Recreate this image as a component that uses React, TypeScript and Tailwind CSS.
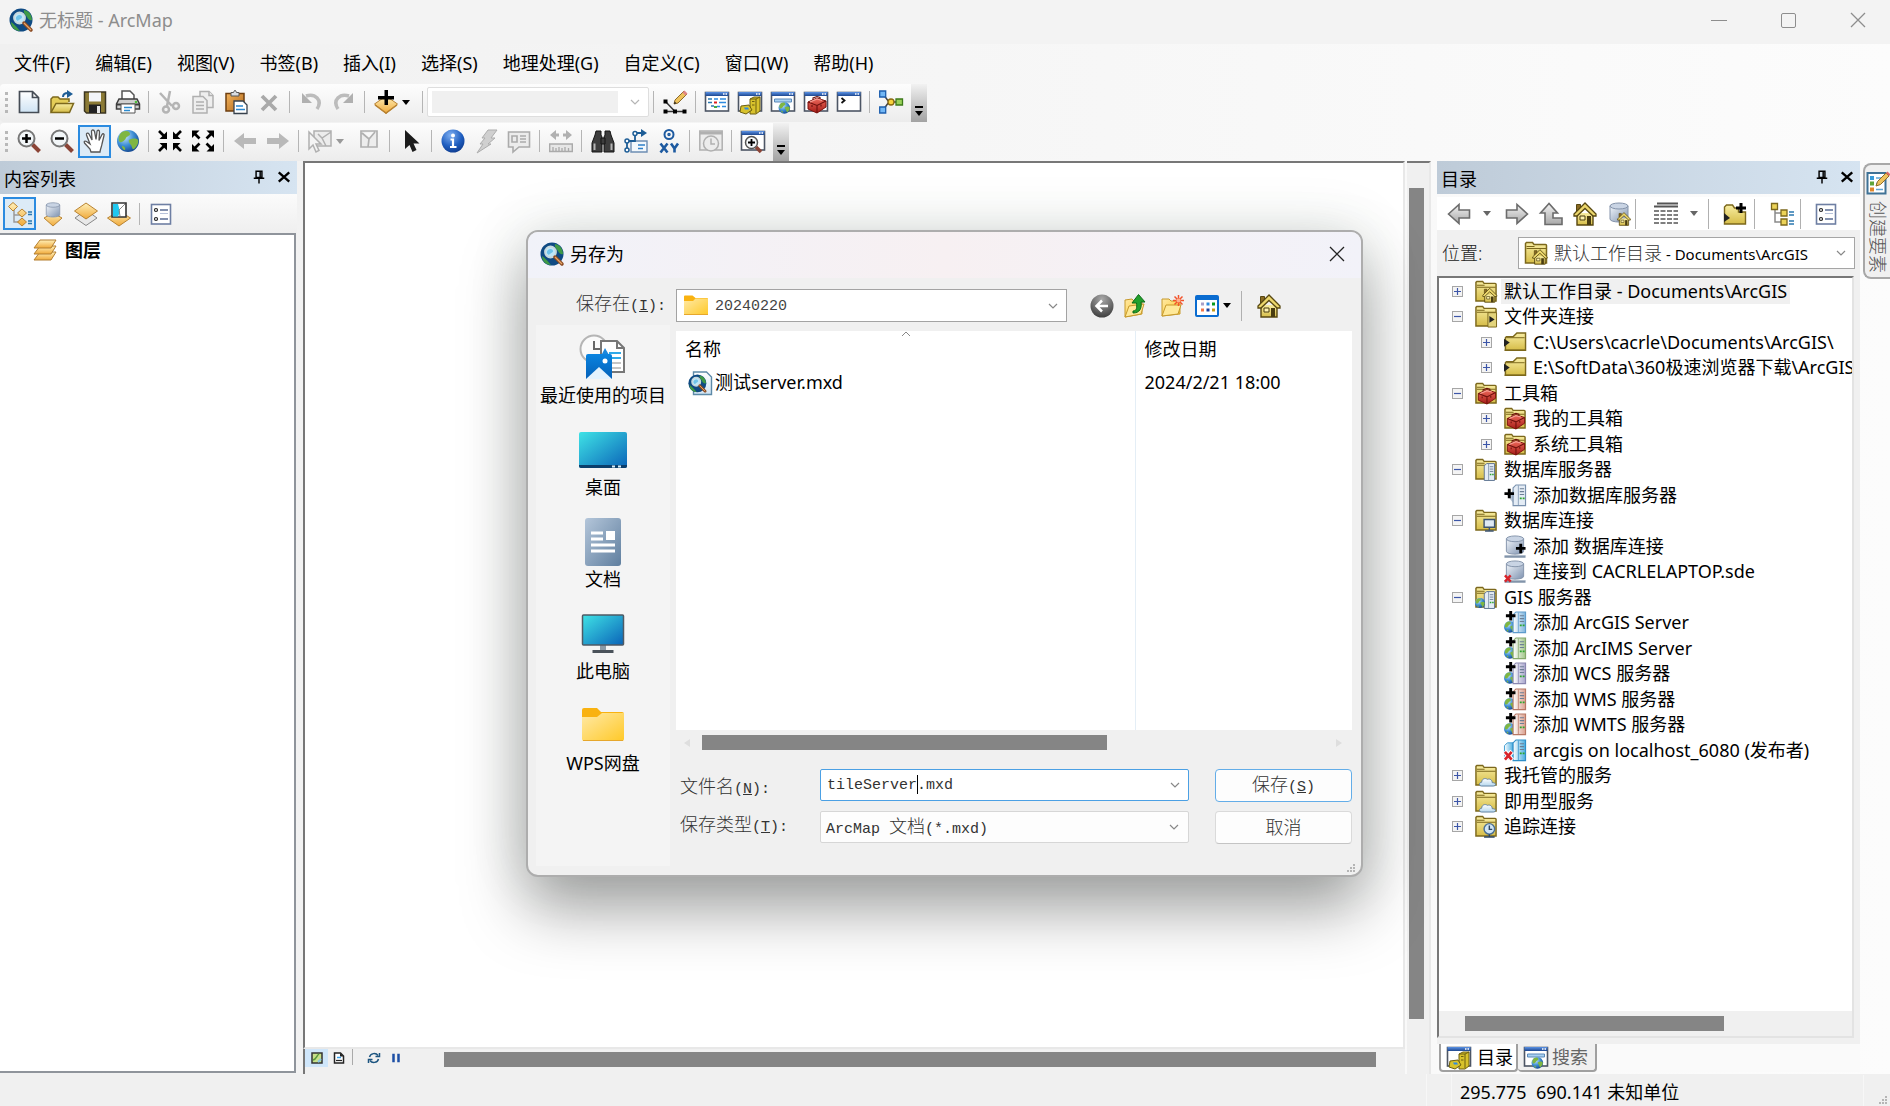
import React from "react";

const UI = "font-['Noto_Sans','Noto_Sans_CJK_SC',sans-serif]";
const MONO = "font-['Liberation_Mono',monospace] text-[15px]";

/* Latin runs of a Song-style label use a half-width monospace face. */
function Song({ text }: { text: string }) {
  const runs = text.match(/[\u3000-\u9fff]+|[^\u3000-\u9fff]+/g) ?? [];
  return (
    <>
      {runs.map((run, i) =>
        /[\u3000-\u9fff]/.test(run) ? (
          <span key={i}>{run}</span>
        ) : (
          <span key={i} className={MONO}>{run}</span>
        )
      )}
    </>
  );
}

function Defs() {
  const g = (id: string, a: string, b: string, x2 = "0", y2 = "1") => (
    <linearGradient id={id} x1="0" y1="0" x2={x2} y2={y2}>
      <stop offset="0" stopColor={a} />
      <stop offset="1" stopColor={b} />
    </linearGradient>
  );
  return (
    <svg className="absolute h-0 w-0" aria-hidden="true">
      <defs>
        {g("olive", "#f8eda2", "#d6bd48")}
        {g("paper", "#ffffff", "#cfe3f3")}
        {g("amber", "#fff0b8", "#f0a93a")}
        {g("steel", "#f2f6fb", "#7d91af", "1", "1")}
        {g("navy", "#5b93e6", "#1e478f")}
        {g("grayArrow", "#f2f2f2", "#a8a8a8")}
        {g("desk", "#3fe3e6", "#0a63b8", "1", "1")}
        {g("docs", "#b4c6da", "#607f9f", "1", "1")}
        {g("yellow", "#ffe9a6", "#ffc928", "1", "1")}
        {g("pic", "#0a84e0", "#0560b8")}
        {g("red", "#ef6a5c", "#a51c16")}
        {g("clip", "#f2b35c", "#b2681a", "1", "1")}
        {g("blueSrv", "#ffffff", "#7db4dd", "1", "0")}
        {g("greenSrv", "#ffffff", "#a2c689", "1", "0")}
        {g("purpleSrv", "#ffffff", "#a9a6cd", "1", "0")}
        {g("redSrv", "#ffffff", "#dba08e", "1", "0")}
        {g("cyanSrv", "#ffffff", "#49ade0", "1", "0")}
        {g("cloud", "#ffffff", "#b5d7ee")}
        <radialGradient id="ocean" cx="0.35" cy="0.3" r="0.8">
          <stop offset="0" stopColor="#c8e8fb" />
          <stop offset="0.5" stopColor="#3f8fd6" />
          <stop offset="1" stopColor="#0c3c85" />
        </radialGradient>
        <radialGradient id="infoBall" cx="0.4" cy="0.25" r="0.8">
          <stop offset="0" stopColor="#7fb0f2" />
          <stop offset="0.6" stopColor="#1f5ec0" />
          <stop offset="1" stopColor="#0e3a8c" />
        </radialGradient>
        <radialGradient id="backBall" cx="0.5" cy="0.2" r="0.9">
          <stop offset="0" stopColor="#a8a8a8" />
          <stop offset="1" stopColor="#333333" />
        </radialGradient>
      </defs>
    </svg>
  );
}

const Win = (
  <>
    <rect x="0.5" y="2.5" width="23" height="18.5" fill="#fff" stroke="#4d5665" strokeWidth="1.6" />
    <rect x="0.5" y="2" width="23" height="4" fill="url(#navy)" />
    <path d="M18 4h1.5M20.5 4H22" stroke="#fff" strokeWidth="1.4" />
  </>
);
const Folder = (
  <>
    <path d="M1.5 22V2.5l1-1h6l1.5 2h11.5a1 1 0 0 1 1 1V22z" fill="url(#olive)" stroke="#7c681c" strokeWidth="1.5" />
    <path d="M2.5 7.5h19.5M2.5 5.5h8" stroke="#7c681c" strokeWidth="1.1" />
  </>
);
const Toolbox = (
  <>
    <path d="M4 12l9-4 9 3v6l-9 6-9-4z" fill="url(#red)" stroke="#7d120e" />
    <path d="M4 12l9 3.5 9-4.5M13 15.5V23M9 10.5V8l4-1.5 3 1V10M8 15v2M17 14.5v2" fill="none" stroke="#6d100c" strokeWidth="1.1" />
    <path d="M6 12l7-3 5 1.500" fill="none" stroke="#f7a095" strokeWidth="1.2" />
  </>
);
const House = (
  <>
    <path d="M4 11v12h16V11" fill="url(#olive)" stroke="#574711" strokeWidth="1.4" />
    <path d="M3.500 2.500h4V9h-4z" fill="#8a6a22" stroke="#574711" />
    <path d="M12 1L1 12v2h3L12 6.500 20 14h3v-2z" fill="#ecd76c" stroke="#574711" strokeWidth="1.3" />
    <path d="M14 14h4v9h-4z" fill="#493c10" />
    <path d="M7 14h5v4H7z" fill="#fff3b0" stroke="#493c10" />
  </>
);
const Globe = (
  <>
    <circle cx="12" cy="12" r="11" fill="url(#ocean)" />
    <path d="M6 3c4-2 8-1 8 2 0 2-3 2-4 4s-4 5-6 4S2 6 6 3zM13 11c3-2 8-2 9 0s-1 7-4 9c-2 1-2-3-3-4s-3-4-2-5zM6 17c2 0 4 2 3 4-2 0-3-2-3-4z" fill="#7fb642" />
  </>
);
const Plus = <path d="M4.500 0h3v3.500H11v3H7.500V10h-3V6.500H1v-3h3.500z" fill="#000" />;
const Cloud = <path d="M7 22c-3 0-3-4 0-4 0-3 3-5 6-3 3-1 5 1 5 3.500 5 0 4 3.500 1 3.500z" transform="translate(0.500 1)" fill="url(#cloud)" stroke="#5f7f9f" />;
const server = (fill: string, edge: string) => (
  <>
    <path d="M10 4l3-3h10v21.500H10z" fill={fill} stroke={edge} strokeWidth="1.2" />
    <path d="M15.500 1.500V22" stroke={edge} strokeWidth="0.8" />
    <path d="M17 5h4.500M17 8h4.500M17 11h4.500" stroke="#6d7f95" strokeWidth="1.2" />
    <path d="M17 15h2M20 15h2" stroke="#2da52d" strokeWidth="2" />
  </>
);
const addServer = (fill: string, edge: string) => (
  <>
    <g transform="translate(0 10) scale(0.550)">{Globe}</g>
    {server(fill, edge)}
    <g transform="translate(1.500 0)">{Plus}</g>
  </>
);
const Cylinder = (
  <>
    <path d="M3 4v13c0 4 18 4 18 0V4z" fill="url(#steel)" stroke="#8493aa" />
    <ellipse cx="12" cy="4" rx="9" ry="3" fill="#c9d4e4" stroke="#8493aa" />
  </>
);
const Options = (
  <>
    <rect x="2.500" y="2.500" width="19" height="19.500" fill="#fff" stroke="#6e7fa3" strokeWidth="1.6" />
    <circle cx="7" cy="8" r="1.500" fill="none" stroke="#222" strokeWidth="1.2" />
    <circle cx="7" cy="17" r="1.500" fill="none" stroke="#222" strokeWidth="1.2" />
    <path d="M11 8h8M11 17h8" stroke="#5a6c94" strokeWidth="1.500" />
    <path d="M11 11.500h8" stroke="#b7c2da" />
  </>
);
const Logo = (
  <>
    <circle cx="12" cy="12" r="11.500" fill="#0f4a83" />
    <path d="M15 2c5 1 8 5 8 10-2 1-4-1-5-3s-4-4-3-7zM2 14c3 2 5 4 9 9-5 0-9-4-9-9z" fill="#3f9a45" />
    <circle cx="10.500" cy="10" r="5.500" fill="#bfe6f7" stroke="#c8d8dc" strokeWidth="1.800" />
    <path d="M8 8c2-2 5-1 5 1s-3 2-4 4c-2-1-3-3-1-5z" fill="#6fc3ea" />
    <path d="M15 15l7 7" stroke="#8a4a22" strokeWidth="3.500" strokeLinecap="round" />
    <path d="M15 15l7 7" stroke="#e6a56a" strokeWidth="1.200" />
  </>
);
const pointers = (kind: "in" | "out") => (
  <g fill="#000" stroke="#000">
    {["", "translate(24 0) scale(-1 1)", "translate(0 24) scale(1 -1)", "translate(24 24) scale(-1 -1)"].map((t) => (
      <g key={t} transform={t}>
        <path d={kind === "in" ? "M1 2l5 5" : "M8.500 9.500L4 5"} strokeWidth="2.600" />
        <path d={kind === "in" ? "M9 2.500V10H1.500z" : "M1 1.500h7.500L1 9z"} stroke="none" />
      </g>
    ))}
  </g>
);
const magnifier = (sign: React.ReactNode) => (
  <>
    <path d="M15.500 15.500l7 7" stroke="#8b4436" strokeWidth="4" />
    <circle cx="9.500" cy="9.500" r="8" fill="#f2f6f8" stroke="#777" strokeWidth="2" />
    {sign}
  </>
);
const treeDots = (c: string) => (
  <>
    <path d="M5 6v14h7M5 11h7" fill="none" stroke="#8a8a8a" strokeWidth="1.500" />
    <g fill={c} stroke="#7c681c" strokeWidth="1.300">
      <path d="M1.500 1.500h6v6h-6zM11 8h6v6h-6zM11 17h6v6h-6z" />
    </g>
    <path d="M19 10h5M19 13h5M19 19h5M19 22h5" stroke="#2b78b0" strokeWidth="1.500" />
  </>
);

const ICONS: Record<string, React.ReactNode> = {
  logo: Logo,
  new: <path d="M2.500 1.500h13l6 6v15h-19zM15.500 1.500v6h6" fill="url(#paper)" stroke="#454c55" strokeWidth="1.700" />,
  open: (
    <>
      <path d="M1 22V9l2-2h5l2 2h9v3" fill="#e4cd58" stroke="#7c681c" strokeWidth="1.500" />
      <path d="M1 22.500l5-9h17.500l-4 9z" fill="url(#olive)" stroke="#7c681c" strokeWidth="1.500" />
      <path d="M13 7c0-3 2-4 5-4" fill="none" stroke="#1d5d96" strokeWidth="2" />
      <path d="M17 0l6 4-6 4z" fill="#1d5d96" />
    </>
  ),
  save: (
    <>
      <path d="M1.500 2h21v21H3.500l-2-2z" fill="#8b7a35" stroke="#3b3520" strokeWidth="1.500" />
      <path d="M6 2.500h12v9H6z" fill="#f3f5f8" />
      <path d="M6 14.500h12V23H6z" fill="#222" />
      <path d="M14 16h3v7h-3z" fill="#e8e8e8" />
    </>
  ),
  print: (
    <>
      <path d="M6 9V1h8l4 4v4" fill="#fff" stroke="#555" strokeWidth="1.500" />
      <path d="M3 9h18l2.500 5v5H.5v-5z" fill="#cfcfcf" stroke="#3e3e3e" strokeWidth="1.500" />
      <path d="M1 14.500h22" stroke="#3e3e3e" strokeWidth="2" />
      <path d="M5 14h14v9H5z" fill="#fff" stroke="#555" />
      <path d="M8 17.500h8M8 20.500h6" stroke="#2b8bd0" strokeWidth="1.500" />
      <circle cx="20" cy="12" r="1.300" fill="#4fc03a" />
    </>
  ),
  cut: (
    <g fill="none" stroke="#b4b4b4" strokeWidth="2.500">
      <path d="M2 3l12 13M12 1l-3 15" />
      <circle cx="8" cy="19.500" r="3" />
      <circle cx="18" cy="16" r="3" />
    </g>
  ),
  copy: (
    <g fill="#eee" stroke="#b0b0b0" strokeWidth="1.500">
      <path d="M9 1.500h9l4 4v12H9z" />
      <path d="M2 6.500h10l4 4V23H2z" />
      <path d="M5 12h8M5 15.500h8M5 19h8M18 1.500v4h4" />
    </g>
  ),
  paste: (
    <>
      <path d="M2 3.500h18V21H2z" fill="url(#clip)" stroke="#6e3f10" strokeWidth="1.500" />
      <path d="M7 6V2.500h2.500l1-2h1l1 2H15V6z" fill="#d9dde2" stroke="#555" />
      <path d="M10 11h9l4 4v8.500H10z" fill="#fff" stroke="#36414d" strokeWidth="1.300" />
      <path d="M12 16h7M12 19.500h9" stroke="#2a86cf" strokeWidth="1.500" />
    </>
  ),
  del: <path d="M5 6l14 14M19 6L5 20" stroke="#a9a9a9" strokeWidth="3.800" />,
  undo: (
    <g>
      <path d="M7 6c9-3 17 4 11 13" fill="none" stroke="#bcbcbc" strokeWidth="3.500" />
      <path d="M3 3v10h10z" fill="#b0b0b0" />
    </g>
  ),
  redo: (
    <g transform="translate(24 0) scale(-1 1)">
      <path d="M7 6c9-3 17 4 11 13" fill="none" stroke="#bcbcbc" strokeWidth="3.500" />
      <path d="M3 3v10h10z" fill="#b0b0b0" />
    </g>
  ),
  add: (
    <>
      <path d="M12 6l11.500 8L12 23.500.5 14z" fill="url(#amber)" stroke="#b98332" />
      <path d="M1 15l11 8 11-8" fill="none" stroke="#b98332" strokeWidth="1.500" />
      <path d="M10.500 0h3.500v6h6v3.500h-6V15h-3.500V9.500H4V6h6.500z" fill="#000" />
    </>
  ),
  editor: (
    <>
      <path d="M2.500 11.500L12 21.500M2.500 21.500H22" stroke="#333" strokeWidth="1.500" fill="none" />
      <path d="M.5 9.500h4v4h-4zM.5 19.500h4v4h-4zM10 19.500h4v4h-4zM19.500 19.500h4v4h-4z" fill="#000" />
      <path d="M11 14l1-4L21 1l3 3-9 9z" fill="#eec25c" stroke="#8c6a2a" />
      <path d="M19.500 2.500L21.500.5l3 3-2 2z" fill="#e08585" />
      <path d="M11 14l.700-2.500 1.800 1.800z" fill="#222" />
    </>
  ),
  toc: (
    <>
      {Win}
      <path d="M3 9h4M3 12.500h4M6 16h3" stroke="#2b78b0" strokeWidth="1.500" />
      <path d="M9 9h4M15 9h6M14 12.500h7M12 16.500h3M17 16.500h4" stroke="#2f8be0" strokeWidth="1.700" />
      <path d="M9 12.500h3" stroke="#d22" strokeWidth="2" />
      <path d="M9 17h3" stroke="#4a4" strokeWidth="2" />
    </>
  ),
  catalog: (
    <>
      {Win}
      <path d="M12 9l4-2h6v14l-4 3h-6z" fill="#d8c22c" stroke="#6d5f10" />
      <path d="M18 9v14M12 9h6l4-2M14 11.500h2.500M14 15h2.500" fill="none" stroke="#6d5f10" />
      <path d="M3 16l8-1 3 5-6 4-6-2z" fill="#d8c22c" stroke="#6d5f10" />
      <path d="M6 17.500h4l1 2H7z" fill="#2f8be0" />
    </>
  ),
  search: (
    <>
      {Win}
      <path d="M3.500 9h17v3h-17z" fill="#a9d1f2" stroke="#5a88b8" />
      <g transform="translate(7 11.500) scale(0.530)">{Globe}</g>
    </>
  ),
  toolbox: (
    <>
      {Win}
      {Toolbox}
    </>
  ),
  python: (
    <>
      {Win}
      <path d="M4.500 8l3 2.500-3 2.500" fill="none" stroke="#111" strokeWidth="1.800" />
    </>
  ),
  model: (
    <>
      <path d="M4 4l6 8-6 8M12 12h10" fill="none" stroke="#444" strokeWidth="1.500" />
      <path d="M.7 1h6v6h-6zM.7 17h6v6h-6z" fill="#72b7f5" stroke="#1e5fae" strokeWidth="1.300" />
      <circle cx="12" cy="12" r="3" fill="#f8d23c" stroke="#8c6a10" strokeWidth="1.300" />
      <path d="M17 9h6.500v6H17z" fill="#9ad25a" stroke="#3d7a1a" strokeWidth="1.300" />
    </>
  ),
  zoomin: magnifier(<path d="M9.500 5v9M5 9.500h9" stroke="#000" strokeWidth="2.500" />),
  zoomout: magnifier(<path d="M5 9.500h9" stroke="#000" strokeWidth="2.500" />),
  pan: (
    <path
      d="M8 23l-1-3-5.500-6c-1-1.500.5-2.500 2-1.500L7 15 3.500 6c-.5-2 1.500-2.500 2.500-1l3 6L8.500 2.500c0-2 2.500-2 3 0l1.500 8 1-8c.3-2 2.500-1.500 2.500.5l-.5 8.500 3-6c1-1.500 2.500-.5 2 1L19 15c-.5 3-1.500 4-2 8z"
      fill="#fff"
      stroke="#555"
      strokeWidth="1.300"
    />
  ),
  globe: Globe,
  fixin: pointers("in"),
  fixout: pointers("out"),
  back: <path d="M1 12l10-8v5h12v6H11v5z" fill="#b9b9b9" />,
  fwd: <path d="M23 12L13 4v5H1v6h12v5z" fill="#b9b9b9" />,
  selfeat: (
    <g stroke="#b0b0b0" strokeWidth="1.500" fill="#ececec">
      <path d="M6 2h17v15H6zM23 3L14 9l-4-4M14 9l4 8" />
      <path d="M1 3v17l4-4 3 7 3-1.500-3-6.500h5z" fill="#f4f4f4" />
    </g>
  ),
  clearsel: <path d="M4 2h16v16H4zM5 4l7 6 6-7M12 10l-1 8" stroke="#b0b0b0" strokeWidth="1.700" fill="#ededed" />,
  pointer: <path d="M6 1v19l4.500-4 3 7 4-2-3-6.500h6z" fill="#1c1c1c" />,
  info: (
    <>
      <circle cx="12" cy="12" r="11.500" fill="url(#infoBall)" />
      <circle cx="12" cy="6.500" r="2" fill="#fff" />
      <path d="M9.500 10.500H12V18M9 18h6.500" fill="none" stroke="#fff" strokeWidth="2.200" />
    </>
  ),
  bolt: <path d="M14 1h9l-6 8h4l-7 6h3L3 24l6-9H6l5-6H8z" fill="#d0d0d0" stroke="#adadad" />,
  html: (
    <g stroke="#ababab" strokeWidth="1.600" fill="#ececec">
      <path d="M1.500 3h21v15H12l-6 5v-5H1.500z" />
      <path d="M5 7h5v6H5zM13 7h6M13 10h6M13 13h6" />
    </g>
  ),
  measure: (
    <g fill="#b0b0b0">
      <path d="M1 6l6-5v3.500h3v3H7V11zM23 6l-6-5v3.500h-3v3h3V11z" />
      <path d="M.7 15h22.600v7.500H.7z" fill="#e6e6e6" stroke="#aaa" strokeWidth="1.400" />
      <path d="M4 18v4M7 19v3M10 18v4M13 19v3M16 18v4M19.500 19v3" stroke="#aaa" strokeWidth="1.300" />
    </g>
  ),
  binoc: (
    <g fill="#3d3d3d" stroke="#151515">
      <path d="M5 2h5v4l1 2v15H1v-9L4 6zM19 2h-5v4l-1 2v15h10v-9l-3-8z" />
      <path d="M10 9h4v6h-4z" />
      <path d="M3.500 14.500V21M20.500 14.500V21" stroke="#b5b5b5" strokeWidth="2" />
    </g>
  ),
  route: (
    <>
      <path d="M7 12h16v11H7z" fill="#f3f8fc" stroke="#6d8db3" strokeWidth="1.400" />
      <path d="M14 16h7M14 19.500h5" stroke="#2f7fc8" strokeWidth="1.600" />
      <path d="M3 21V12h8V4h8" fill="none" stroke="#1d5d96" strokeWidth="1.800" />
      <path d="M17 0l6 4-6 4z" fill="#1d5d96" />
      <g fill="#fff" stroke="#1d5d96" strokeWidth="1.500">
        <circle cx="3" cy="21" r="2" />
        <circle cx="3" cy="12" r="2" />
        <circle cx="11" cy="4.500" r="2" />
      </g>
    </>
  ),
  xy: (
    <g fill="none" stroke="#1d5aa0">
      <circle cx="12" cy="5.500" r="4.500" strokeWidth="2" />
      <circle cx="12" cy="5.500" r="1" strokeWidth="1.500" />
      <path d="M3.500 14.500l7 9M10.500 14.500l-7 9M14 14.500l3.500 5 3.500-5M17.500 19.500v4" strokeWidth="2.600" />
    </g>
  ),
  time: (
    <g stroke="#b0b0b0" strokeWidth="1.500" fill="#ececec">
      <path d="M.8 2h22.400v19H.8z" />
      <path d="M1 4h22" strokeWidth="3" />
      <circle cx="12" cy="14.500" r="7.500" />
      <path d="M12 9.500v5.500h4" fill="none" />
    </g>
  ),
  viewer: (
    <>
      {Win}
      <path d="M15 18l5 5" stroke="#8b4436" strokeWidth="3.500" />
      <circle cx="10.500" cy="13.500" r="6" fill="#f6f9fb" stroke="#555" strokeWidth="1.500" />
      <path d="M10.500 10v7M7 13.500h7" stroke="#000" strokeWidth="1.800" />
    </>
  ),
  listorder: (
    <>
      <path d="M6 8v12h7M6 13h7" fill="none" stroke="#9a9a9a" strokeWidth="1.500" />
      <g fill="url(#amber)" stroke="#b98332">
        <path d="M5 .5l4.500 4L5 9 .5 4.500zM14 7l4.500 4-4.500 4-4.500-4zM14 16l4.500 4-4.500 4-4.500-4z" />
      </g>
      <path d="M20 10h4M20 12.500h4M20 19h4M20 21.500h4" stroke="#2b78b0" strokeWidth="1.600" />
    </>
  ),
  listsource: (
    <>
      <path d="M12 11l9 5-9 8-9-8z" fill="url(#amber)" stroke="#b98332" />
      <g transform="translate(3 0) scale(0.750)">{Cylinder}</g>
    </>
  ),
  listvis: (
    <>
      <path d="M12 8l11 8-11 7.500L1 16z" fill="#e8e8e8" stroke="#888" />
      <path d="M12 1l11.500 8L12 17 .5 9z" fill="url(#amber)" stroke="#b98332" />
    </>
  ),
  listsel: (
    <>
      <path d="M12 9l11.500 7L12 24 .5 16z" fill="url(#amber)" stroke="#b98332" />
      <path d="M5 1h14v14H5z" fill="#fff" stroke="#333" strokeWidth="1.600" />
      <path d="M6 2h5l2 8-2 4.500H6z" fill="#20c8f0" />
      <path d="M18 2l-6 6 1 6" fill="none" stroke="#888" />
    </>
  ),
  options: Options,
  layers: (
    <g fill="url(#amber)" stroke="#b37f30">
      <path d="M7 14h16l-5 8H1z" />
      <path d="M7 8h16l-5 8H1z" />
      <path d="M7 2h16l-5 8H1z" />
    </g>
  ),
  arrowl: <path d="M1.500 12L12 2.500V8h10.500v8H12v5.500z" fill="url(#grayArrow)" stroke="#6b6b6b" strokeWidth="1.600" />,
  arrowr: <path d="M22.500 12L12 2.500V8H1.500v8H12v5.500z" fill="url(#grayArrow)" stroke="#6b6b6b" strokeWidth="1.600" />,
  arrowup: <path d="M10 1.500L1.500 11H6v11.500h17V16H14v-5h4.500z" fill="url(#grayArrow)" stroke="#6b6b6b" strokeWidth="1.600" />,
  home: House,
  dbhome: (
    <>
      {Cylinder}
      <g transform="translate(10 10) scale(0.580)">{House}</g>
    </>
  ),
  grid: (
    <g stroke="#555" fill="none">
      <path d="M3 1.500h21M0 4.500h24" strokeWidth="2" />
      <path d="M0 9h24M0 13h24M0 17h24M0 21h24" strokeWidth="1.600" strokeDasharray="5 1.500" />
    </g>
  ),
  addfolder: (
    <>
      <path d="M1.500 22V5l2-2h6l2 3h4v4h7v12z" fill="url(#olive)" stroke="#7c681c" strokeWidth="1.400" />
      <path d="M1 11l6 5-6 4z" fill="#222" />
      <g transform="translate(12 1)">{Plus}</g>
    </>
  ),
  tree: treeDots("#ecd358"),
  folderhome: (
    <>
      {Folder}
      <g transform="translate(8 8) scale(0.660)">{House}</g>
    </>
  ),
  folderlink: (
    <>
      {Folder}
      <path d="M14 8h9v15h-9z" fill="#e3d47c" stroke="#7c681c" />
      <path d="M15.500 11.500l5.500 3.500-5.500 3.500z" fill="#222" />
    </>
  ),
  folderconn: (
    <>
      <path d="M2 20V7l1-1h7l4-4h9v18z" fill="url(#olive)" stroke="#7c681c" strokeWidth="1.500" />
      <path d="M3 7h19M1 20h22" stroke="#7c681c" />
      <path d="M.5 8l6 4-6 4.500z" fill="#222" />
    </>
  ),
  foldertool: (
    <>
      {Folder}
      {Toolbox}
    </>
  ),
  folderserver: (
    <>
      {Folder}
      <g transform="translate(2 5) scale(0.820)">{server("#e4ecf5", "#5d7390")}</g>
    </>
  ),
  foldergis: (
    <>
      {Folder}
      <g transform="translate(2 5) scale(0.820)">{server("#e4ecf5", "#5d7390")}</g>
      <g transform="translate(0 12) scale(0.480)">{Globe}</g>
    </>
  ),
  folderdb: (
    <>
      {Folder}
      <path d="M10 11h11v8H10zM15.500 19v4M11 23h9" fill="#dfe9f4" stroke="#3d5470" strokeWidth="1.500" />
    </>
  ),
  foldercloud: (
    <>
      {Folder}
      {Cloud}
    </>
  ),
  folderclock: (
    <>
      {Folder}
      <circle cx="15.500" cy="14.500" r="5.500" fill="#cfe5f7" stroke="#4a6f94" strokeWidth="1.500" />
      <path d="M15.500 11v4h3M15.500 20v3M10 23h11" fill="none" stroke="#2c4560" strokeWidth="1.500" />
    </>
  ),
  adddbserver: (
    <>
      <path d="M4 12l7-6v15z" fill="#b7c4d4" />
      {server("#e4ecf5", "#7890ad")}
      <g transform="translate(0 5)">{Plus}</g>
    </>
  ),
  adddb: (
    <>
      <path d="M1 22.500h22" stroke="#8294aa" strokeWidth="2.500" />
      {Cylinder}
      <g transform="translate(12 9)">{Plus}</g>
    </>
  ),
  sde: (
    <>
      <path d="M1 22.500h22" stroke="#8294aa" strokeWidth="2.500" />
      {Cylinder}
      <path d="M1.500 16l6 6.500M7.500 16l-6 6.500" stroke="#d8232a" strokeWidth="2.500" />
    </>
  ),
  sblue: addServer("url(#blueSrv)", "#5f9ccc"),
  sgreen: addServer("url(#greenSrv)", "#86a86c"),
  spurple: addServer("url(#purpleSrv)", "#8a87b0"),
  sred: addServer("url(#redSrv)", "#b87865"),
  scyan: (
    <>
      <path d="M1 21V7l3-3h6v17z" fill="url(#cyanSrv)" stroke="#3d9bd0" />
      {server("url(#cyanSrv)", "#2f8fc8")}
      <path d="M1 13l8 9M9 13l-8 9" stroke="#fff" strokeWidth="5" />
      <path d="M1.500 13.500l7 8M8.500 13.500l-7 8" stroke="#d8232a" strokeWidth="2.800" />
    </>
  ),
  create: (
    <>
      <path d="M1.500 2h18v20.500h-18z" fill="#fff" stroke="#3f7296" strokeWidth="2" />
      <path d="M4 5h4v4H4z" fill="#3a9bd8" />
      <path d="M4 10.500h4v4H4z" fill="#5fa53a" />
      <path d="M4 16.500h4v4H4z" fill="#e0862a" />
      <path d="M10 7h7M10 12.500h4M10 18.500h7" stroke="#5fa5d5" strokeWidth="1.500" />
      <path d="M10 15l1.500-4.500L20 2l3 3-8.500 8.500z" fill="#eec25c" stroke="#8c6a2a" />
      <path d="M20 2l1.500-1.500 3 3L23 5z" fill="#d66" />
    </>
  ),
  backball: (
    <>
      <circle cx="12" cy="12" r="11.500" fill="url(#backBall)" />
      <path d="M18 12H7M12 6.500L6.500 12l5.500 5.500" fill="none" stroke="#fff" strokeWidth="2.500" />
    </>
  ),
  upfolder: (
    <>
      <path d="M2 23V6l7-1 2 2 8-1v14z" fill="url(#yellow)" stroke="#c79a2c" />
      <path d="M2 23l4-11 15-2-3 10z" fill="#ffe999" stroke="#c79a2c" />
      <path d="M10 17c4 0 4-4 3.500-8H9l6.500-8.500L22 8h-4c1 6-1 11-8 11z" fill="#22a02c" stroke="#0e6b18" />
    </>
  ),
  newfolder: (
    <>
      <path d="M2 22V5h7l2 2h9v13z" fill="url(#yellow)" stroke="#c79a2c" />
      <path d="M2 22l4-11h15l-3 9z" fill="#ffe999" stroke="#c79a2c" />
      <path d="M18.500 1v11M13 6.500h11M14.500 2.500l8 8M22.500 2.500l-8 8" stroke="#f2532c" strokeWidth="1.500" />
      <circle cx="18.500" cy="6.500" r="2" fill="#ffb08c" />
    </>
  ),
  views: (
    <>
      <rect x="1" y="2" width="22" height="20" rx="1" fill="#fff" stroke="#0a6cd0" strokeWidth="2" />
      <path d="M1 2h22v4H1z" fill="#0a6cd0" />
      <path d="M6 10h3" stroke="#a9a0c8" strokeWidth="3" />
      <path d="M11.500 10h3" stroke="#2d8be0" strokeWidth="3" />
      <path d="M17 10h3" stroke="#0a9a1c" strokeWidth="3" />
      <path d="M6 16h3" stroke="#f3774a" strokeWidth="3" />
      <path d="M11.500 16h3" stroke="#1b3f9c" strokeWidth="3" />
      <path d="M17 16h3" stroke="#c59a1a" strokeWidth="3" />
    </>
  ),
  folder: (
    <>
      <path d="M0 3.500a1 1 0 0 1 1-1h7.500l3 2.500H23a1 1 0 0 1 1 1v4H0z" fill="#f9b210" />
      <path d="M0 8h9l2.500-2.500H24V21a1 1 0 0 1-1 1H1a1 1 0 0 1-1-1z" fill="url(#yellow)" />
      <path d="M0 21.500h24" stroke="#e6a72c" />
    </>
  ),
  mxd: (
    <>
      <path d="M5.500 1h13l5 5v17.500h-18z" fill="url(#paper)" stroke="#5d8aa8" strokeWidth="1.400" />
      <g transform="translate(0 3) scale(0.780)">{Logo}</g>
    </>
  ),
  pin: <path d="M7 2h10v11H7zM14 2v11M3 14h18M12 14v9" fill="none" stroke="#000" strokeWidth="2.500" />,
  close: <path d="M3 4l18 16M21 4L3 20" stroke="#000" strokeWidth="4" />,
  mapview: (
    <>
      <rect x="2" y="2" width="20" height="20" fill="#c8e08a" stroke="#333" strokeWidth="3" />
      <path d="M4 16c8-2 6-8 12-12" fill="none" stroke="#5a9a3a" strokeWidth="3" />
      <path d="M14 20l6-6" stroke="#8ac8e8" strokeWidth="4" />
    </>
  ),
  pageview: (
    <>
      <path d="M3 2h12l6 6v14H3z" fill="#fff" stroke="#222" strokeWidth="3" />
      <path d="M14 2v7h7" fill="#222" />
      <path d="M8 11h8" stroke="#3aa0e8" strokeWidth="3" />
      <path d="M6 17h12" stroke="#222" strokeWidth="2.500" />
    </>
  ),
  refresh: (
    <g fill="none" stroke="#1d5580" strokeWidth="3">
      <path d="M3 10c2-8 13-9 17-3M21 14c-2 8-13 9-17 3" />
      <path d="M15 9h8V2M9 15H1v7" />
    </g>
  ),
  pause: <path d="M6 2v20M18 2v20" stroke="#1d4fa5" strokeWidth="6" />,
};

function Icon({ name, className = "h-6 w-6" }: { name: string; className?: string }) {
  return (
    <svg viewBox="0 0 24 24" className={`${className} shrink-0 overflow-visible`} aria-hidden="true">
      {ICONS[name]}
    </svg>
  );
}

function Tool({ name, active = false }: { name: string; active?: boolean }) {
  return (
    <button
      type="button"
      aria-label={name}
      className={`flex h-[33px] w-[33px] shrink-0 items-center justify-center ${active ? "border-2 border-[#2b8be0] bg-[#dcebf7]" : ""}`}
    >
      <Icon name={name} />
    </button>
  );
}
const Sep = () => <span className="mx-1 h-[22px] w-px shrink-0 bg-[#b5b5b5]" />;
const Caret = ({ className = "text-black" }: { className?: string }) => (
  <svg viewBox="0 0 8 5" className={`h-[5px] w-2 ${className}`} aria-hidden="true">
    <path d="M0 0h8L4 5z" fill="currentColor" />
  </svg>
);
const CaretTool = ({ className, width = "w-4" }: { className?: string; width?: string }) => (
  <button type="button" aria-label="more" className={`flex h-8 shrink-0 items-center ${width}`}>
    <Caret className={className} />
  </button>
);
const Chevron = ({ className = "text-[#888]" }: { className?: string }) => (
  <svg viewBox="0 0 10 6" className={`pointer-events-none h-[6px] w-[10px] shrink-0 ${className}`} aria-hidden="true">
    <path d="M1 1l4 4 4-4" fill="none" stroke="currentColor" strokeWidth="1.200" />
  </svg>
);
const FieldChevron = () => (
  <span className="pointer-events-none absolute inset-y-0 right-[9px] flex items-center">
    <Chevron />
  </span>
);
const Grip = () => (
  <span className="flex w-3 shrink-0 flex-col items-center justify-center gap-[3px]">
    {[0, 1, 2, 3].map((i) => (
      <span key={i} className="h-[3px] w-[3px] bg-[#b8b8b8]" />
    ))}
  </span>
);
const Overflow = () => (
  <button type="button" aria-label="toolbar options" className="flex w-4 shrink-0 flex-col items-center justify-end gap-[3px] self-stretch bg-linear-to-b from-[#f2f2f2] to-[#a3a3a3] pb-[6px]">
    <span className="h-[2px] w-2 bg-black" />
    <Caret />
  </button>
);

function Toolbar({ items }: { items: (string | React.ReactElement)[] }) {
  return (
    <div className="flex h-[38px] items-stretch">
      <div className="flex items-center rounded-l bg-linear-to-b from-[#fdfdfd] to-[#ececec] pb-[2px] pr-1">
        <Grip />
        {items.map((it, i) =>
          typeof it !== "string" ? (
            <React.Fragment key={i}>{it}</React.Fragment>
          ) : it === "|" ? (
            <Sep key={i} />
          ) : (
            <Tool key={i} name={it} active={it === "pan"} />
          )
        )}
      </div>
      <Overflow />
    </div>
  );
}

const MENUS = ["文件(F)", "编辑(E)", "视图(V)", "书签(B)", "插入(I)", "选择(S)", "地理处理(G)", "自定义(C)", "窗口(W)", "帮助(H)"];

function PanelTitle({ text }: { text: string }) {
  return (
    <header className="flex h-[33px] shrink-0 items-center justify-between bg-linear-to-r from-[#becbd8] to-[#d6e4f1] pl-1 pr-[6px] text-[18px]">
      <h2 className="pt-[3px]">{text}</h2>
      <div className="flex items-center gap-[11px] pb-[2px]">
        <button type="button" aria-label="pin"><Icon name="pin" className="h-4 w-[14px]" /></button>
        <button type="button" aria-label="close panel"><Icon name="close" className="h-[14px] w-[14px]" /></button>
      </div>
    </header>
  );
}

type Node = { level: 0 | 1; toggle?: "+" | "-"; icon: string; text: string; selected?: boolean };
const NODES: Node[] = [
  { level: 0, toggle: "+", icon: "folderhome", text: "默认工作目录 - Documents\\ArcGIS", selected: true },
  { level: 0, toggle: "-", icon: "folderlink", text: "文件夹连接" },
  { level: 1, toggle: "+", icon: "folderconn", text: "C:\\Users\\cacrle\\Documents\\ArcGIS\\" },
  { level: 1, toggle: "+", icon: "folderconn", text: "E:\\SoftData\\360极速浏览器下载\\ArcGIS" },
  { level: 0, toggle: "-", icon: "foldertool", text: "工具箱" },
  { level: 1, toggle: "+", icon: "foldertool", text: "我的工具箱" },
  { level: 1, toggle: "+", icon: "foldertool", text: "系统工具箱" },
  { level: 0, toggle: "-", icon: "folderserver", text: "数据库服务器" },
  { level: 1, icon: "adddbserver", text: "添加数据库服务器" },
  { level: 0, toggle: "-", icon: "folderdb", text: "数据库连接" },
  { level: 1, icon: "adddb", text: "添加 数据库连接" },
  { level: 1, icon: "sde", text: "连接到 CACRLELAPTOP.sde" },
  { level: 0, toggle: "-", icon: "foldergis", text: "GIS 服务器" },
  { level: 1, icon: "sblue", text: "添加 ArcGIS Server" },
  { level: 1, icon: "sgreen", text: "添加 ArcIMS Server" },
  { level: 1, icon: "spurple", text: "添加 WCS 服务器" },
  { level: 1, icon: "sred", text: "添加 WMS 服务器" },
  { level: 1, icon: "sred", text: "添加 WMTS 服务器" },
  { level: 1, icon: "scyan", text: "arcgis on localhost_6080 (发布者)" },
  { level: 0, toggle: "+", icon: "foldercloud", text: "我托管的服务" },
  { level: 0, toggle: "+", icon: "foldercloud", text: "即用型服务" },
  { level: 0, toggle: "+", icon: "folderclock", text: "追踪连接" },
];

function Toggle({ sign }: { sign?: "+" | "-" }) {
  if (!sign) return <span className="w-[11px] shrink-0" />;
  return (
    <button type="button" aria-label={sign === "+" ? "expand" : "collapse"} className="h-[11px] w-[11px] shrink-0">
      <svg viewBox="0 0 11 11" className="h-full w-full">
        <rect x="0.5" y="0.5" width="10" height="10" fill="#f4f4f4" stroke="#a6a6a6" />
        <path d={sign === "+" ? "M2 5.500h7M5.500 2v7" : "M2 5.500h7"} stroke="#3c56a8" strokeWidth="1.200" />
      </svg>
    </button>
  );
}

function Contents() {
  return (
    <aside className="flex w-[297px] shrink-0 flex-col">
      <PanelTitle text="内容列表" />
      <div className="flex h-[39px] shrink-0 items-center bg-linear-to-b from-[#fbfbfb] to-[#efefef] pl-[3px]">
        <Tool name="listorder" active />
        <Tool name="listsource" />
        <Tool name="listvis" />
        <Tool name="listsel" />
        <Sep />
        <Tool name="options" />
      </div>
      <div className="mb-px mr-[1px] flex-1 border-2 border-l-0 border-[#8f949b] bg-white pl-[33px] pt-px">
        <div className="flex h-[28px] items-center gap-2 text-[18px] font-bold">
          <Icon name="layers" />
          图层
        </div>
      </div>
    </aside>
  );
}

function MapView() {
  return (
    <main className="flex min-w-0 flex-1">
      <div className="flex min-w-0 flex-1 flex-col">
        <div className="flex-1 border-2 border-b-[#e8e8e8] border-l-[#777] border-r-[#e8e8e8] border-t-[#777] bg-white" />
        <div className="flex h-[25px] shrink-0 items-start border-l-2 border-[#777] bg-[#f0f0f0]">
          <button type="button" aria-label="data view" className="flex h-[18px] w-[23px] items-center justify-center bg-[#cfe6fa]">
            <Icon name="mapview" className="h-3 w-3" />
          </button>
          <button type="button" aria-label="layout view" className="flex h-[18px] w-[22px] items-center justify-center">
            <Icon name="pageview" className="h-3 w-3" />
          </button>
          <span className="mx-[2px] h-4 w-px bg-[#aaa]" />
          <button type="button" aria-label="refresh" className="ml-2 flex h-[18px] w-[22px] items-center justify-center">
            <Icon name="refresh" className="h-3 w-3" />
          </button>
          <button type="button" aria-label="pause" className="flex h-[18px] w-[22px] items-center justify-center">
            <Icon name="pause" className="h-[10px] w-3" />
          </button>
          <div className="mt-[3px] flex-1 pl-[37px] pr-[29px]">
            <div className="h-[15px] bg-[#858585]" />
          </div>
        </div>
      </div>
      <div className="ml-[2px] flex w-[24px] shrink-0 flex-col border-r-2 border-t-2 border-r-[#e8e8e8] border-t-[#777] bg-[#f0f0f0] pb-[55px] pl-[2px] pt-[25px]">
        <div className="w-[15px] flex-1 bg-[#858585]" />
      </div>
    </main>
  );
}

const Rule = () => <span className="h-[30px] w-px shrink-0 bg-[#b0b0b0]" />;

function Catalog() {
  return (
    <aside className="ml-[6px] flex w-[423px] shrink-0 flex-col">
      <PanelTitle text="目录" />
      <div className="mt-[3px] flex h-[33px] shrink-0 items-center bg-white pl-[5px]">
        <Tool name="arrowl" />
        <div className="flex w-[25px] items-center pl-2">
          <CaretTool className="text-[#666]" />
        </div>
        <div className="flex items-center gap-px">
          <Tool name="arrowr" />
          <Tool name="arrowup" />
          <Tool name="home" />
          <Tool name="dbhome" />
        </div>
        <Rule />
        <div className="flex w-[72px] items-center gap-2 pl-[13px]">
          <Tool name="grid" />
          <CaretTool className="text-[#666]" />
        </div>
        <Rule />
        <div className="flex items-center pl-[9px] pr-[3px]">
          <Tool name="addfolder" />
        </div>
        <Rule />
        <div className="flex items-center pl-[10px] pr-[2px]">
          <Tool name="tree" />
        </div>
        <Rule />
        <div className="flex items-center pl-2">
          <Tool name="options" />
        </div>
      </div>
      <div className="flex flex-1 flex-col bg-[#f0f0f0]">
        <div className="flex h-[46px] items-center pl-[5px] pr-[5px] text-[18px] font-light text-[#222]">
          <label htmlFor="loc" className="w-[76px]">位置:</label>
          <div className="flex h-8 flex-1 items-center gap-[6px] border border-[#a5a5a5] bg-white px-[5px]">
            <Icon name="folderhome" />
            <div className="relative flex h-full flex-1 items-center">
              <span className="pointer-events-none whitespace-nowrap text-black">
                <span className="text-[#333]">默认工作目录</span>
                <span className="text-[15px] font-normal"> - Documents\ArcGIS</span>
              </span>
              <select id="loc" className="absolute inset-0 w-full cursor-pointer appearance-none opacity-0">
                <option>默认工作目录 - Documents\ArcGIS</option>
              </select>
            </div>
            <Chevron className="mr-[3px] text-[#888]" />
          </div>
        </div>
        <div className="mr-[6px] flex flex-1 flex-col overflow-hidden border-2 border-b-[#e3e3e3] border-l-[#777] border-r-[#e3e3e3] border-t-[#777] bg-white">
          <ul className="flex-1">
            {NODES.map((n) => (
              <li
                key={n.text}
                className={`flex items-center whitespace-nowrap text-[18px] leading-[25px] odd:h-[26px] even:h-[25px] ${n.level ? "pl-[42px]" : "pl-[13px]"}`}
              >
                <Toggle sign={n.toggle} />
                <Icon name={n.icon} className="ml-[11px] h-[23px] w-6" />
                <span className={`ml-[3px] px-[3px] ${n.selected ? "bg-[#f0f0f0]" : ""}`}>{n.text}</span>
              </li>
            ))}
          </ul>
          <div className="h-[25px] bg-[#f0f0f0] pl-[26px] pt-[5px]">
            <div className="h-[15px] w-[67%] bg-[#858585]" />
          </div>
        </div>
        <div className="h-[6px]" />
      </div>
      <nav className="mb-[2px] flex h-7 shrink-0 bg-[#fafafa] pl-[2px] text-[18px]">
        <button type="button" className="flex w-[79px] items-center gap-[6px] rounded-b border-2 border-t-0 border-[#a0a0a0] bg-white pl-[6px]">
          <Icon name="catalog" />
          目录
        </button>
        <button type="button" className="flex w-[79px] items-center gap-1 rounded-b border-2 border-l-0 border-t-0 border-[#a0a0a0] bg-[#f0f0f0] pl-[6px] text-[#666]">
          <Icon name="search" />
          搜索
        </button>
      </nav>
    </aside>
  );
}

const PLACES = [
  { id: "recent", label: "最近使用的项目" },
  { id: "desktop", label: "桌面" },
  { id: "documents", label: "文档" },
  { id: "pc", label: "此电脑" },
  { id: "wps", label: "WPS网盘" },
];
const PLACE_ART: Record<string, React.ReactNode> = {
  recent: (
    <>
      <circle cx="15" cy="15" r="13.500" fill="#fafafa" stroke="#b5b5b5" strokeWidth="2" />
      <path d="M15 7v8h7" fill="none" stroke="#666" strokeWidth="2" />
      <path d="M22 7h16l7 7v24H22z" fill="#fff" stroke="#777" strokeWidth="2" />
      <path d="M38 7v7h7" fill="none" stroke="#777" strokeWidth="2" />
      <path d="M30 19h12M30 24h12" stroke="#2fa9e8" strokeWidth="2" />
      <path d="M33 29h9M33 34h9" stroke="#c5c5c5" strokeWidth="2" />
      <path d="M23 20l3-6 4 7z" fill="#1b87dc" />
      <path d="M7 22a2 2 0 0 1 2-2h22a2 2 0 0 1 2 2v23H7z" fill="url(#pic)" />
      <path d="M7 45l13-12 13 12z" fill="#e4f2fd" />
      <circle cx="26" cy="27" r="2.500" fill="#fff" />
    </>
  ),
  desktop: (
    <>
      <rect x="0" y="6" width="48" height="36" rx="2" fill="url(#desk)" />
      <path d="M0 39h48v1a2 2 0 0 1-2 2H2a2 2 0 0 1-2-2z" fill="#0b3e6b" />
      <path d="M33 40.500h3M39 40.500h3" stroke="#d8eefa" strokeWidth="2" />
    </>
  ),
  documents: (
    <>
      <rect x="6" y="0" width="36" height="48" rx="3" fill="url(#docs)" />
      <path d="M12 15h12M12 21h12M12 27h24M12 33h24" stroke="#fff" strokeWidth="3" />
      <path d="M27 13h9v9h-9z" fill="#fff" />
    </>
  ),
  pc: (
    <>
      <path d="M21 35h6v6h-6z" fill="#8c9aa6" />
      <rect x="3.500" y="5" width="41" height="30" rx="1" fill="url(#desk)" stroke="#4f5a64" strokeWidth="1.500" />
      <path d="M13.500 41.500h21" stroke="#4a525a" strokeWidth="3" />
    </>
  ),
  wps: (
    <>
      <path d="M3 8a2 2 0 0 1 2-2h13l4 4h21a2 2 0 0 1 2 2v8H3z" fill="#f9b210" />
      <path d="M3 15h15l5-4h22v26a2 2 0 0 1-2 2H5a2 2 0 0 1-2-2z" fill="url(#yellow)" />
      <path d="M4 38.500h40" stroke="#e6a72c" />
    </>
  ),
};

function SaveDialog() {
  return (
    <section
      role="dialog"
      aria-label="另存为"
      className="absolute left-[526px] top-[230px] flex w-[837px] flex-col overflow-hidden rounded-xl border-2 border-[#adadad] bg-[#f0f0f0] pb-[9px] shadow-[0_32px_64px_rgba(0,0,0,0.36),0_0_60px_rgba(40,80,60,0.12)]"
    >
      <header className="flex h-[46px] items-center justify-between bg-linear-to-r from-[#f1f2f9] via-[#f7f0f2] to-[#f2f2f9] pb-[2px] pl-3 pr-4 text-[18px]">
        <div className="flex items-center gap-[6px]">
          <Icon name="logo" />
          <h1 className="text-[18px]">另存为</h1>
        </div>
        <button type="button" aria-label="close">
          <svg viewBox="0 0 16 16" className="h-4 w-4">
            <path d="M1 1l14 14M15 1L1 15" stroke="#222" strokeWidth="1.300" />
          </svg>
        </button>
      </header>

      <div className="flex h-[53px] items-start pt-[11px]">
        <label htmlFor="dir" className="w-[148px] pl-[48px] pt-px text-[18px] font-light leading-[26px] text-[#333]">
          保存在<span className={MONO}>(<u>I</u>):</span>
        </label>
        <div className="relative h-[33px] w-[391px]">
          <select id="dir" className={`h-full w-full appearance-none border border-[#a3a3a3] bg-white pl-[38px] pt-[2px] leading-[30px] text-[#444] ${MONO}`}>
            <option>20240220</option>
          </select>
          <span className="pointer-events-none absolute left-2 top-1"><Icon name="folder" /></span>
          <FieldChevron />
        </div>
        <div className="ml-[18px] flex h-[33px] items-center">
          <Tool name="backball" />
          <Tool name="upfolder" />
          <span className="w-1" />
          <Tool name="newfolder" />
          <span className="w-[2px]" />
          <Tool name="views" />
          <CaretTool width="w-[18px]" />
          <Rule />
          <span className="w-[10px]" />
          <Tool name="home" />
        </div>
      </div>

      <div className="flex">
        <nav className="ml-2 mt-[-6px] h-[541px] w-[134px] shrink-0 bg-[#f4f4f4] pt-[9px]">
          {PLACES.map((p) => (
            <button key={p.id} type="button" className="flex h-[92px] w-full flex-col items-center whitespace-nowrap text-[18px]">
              <svg viewBox="0 0 48 48" className="h-12 w-12 shrink-0 overflow-visible" aria-hidden="true">{PLACE_ART[p.id]}</svg>
              <span className="leading-[26px]">{p.label}</span>
            </button>
          ))}
        </nav>

        <div className="ml-[6px] mr-[9px] flex min-w-0 flex-1 flex-col">
          <div className="relative h-[399px] bg-white">
            <svg viewBox="0 0 10 6" className="absolute left-[225px] top-0 h-[6px] w-[10px]" aria-hidden="true">
              <path d="M1 5l4-4 4 4" fill="none" stroke="#888" />
            </svg>
            <table className="h-full w-full table-fixed text-left text-[18px]">
              <thead>
                <tr className="h-[36px]">
                  <th className="w-[459px] border-r border-[#e4eef6] pl-[9px] font-normal">名称</th>
                  <th className="pl-[9px] font-normal">修改日期</th>
                </tr>
              </thead>
              <tbody>
                <tr className="h-[31px]">
                  <td className="border-r border-[#e4eef6] pl-3">
                    <span className="flex items-center gap-[3px]">
                      <Icon name="mxd" />
                      <span>测试server.mxd</span>
                    </span>
                  </td>
                  <td className="pl-[9px]">2024/2/21 18:00</td>
                </tr>
                <tr>
                  <td className="border-r border-[#e4eef6]" />
                  <td />
                </tr>
              </tbody>
            </table>
          </div>
          <div className="flex h-[25px] items-center justify-between pl-2 pr-[10px]">
            <svg viewBox="0 0 6 8" className="h-2 w-[6px]"><path d="M6 0v8L0 4z" fill="#dedede" /></svg>
            <span className="ml-3 mr-auto h-[15px] w-[405px] bg-[#858585]" />
            <svg viewBox="0 0 6 8" className="h-2 w-[6px]"><path d="M0 0v8l6-4z" fill="#dedede" /></svg>
          </div>

          <div className="mt-[14px] grid grid-cols-[144px_369px_1fr] gap-y-2 font-light text-[#333]">
            <label htmlFor="fname" className="pl-1 pt-1 text-[18px] leading-[26px]">
              文件名<span className={MONO}>(<u>N</u>):</span>
            </label>
            <div className="relative h-8">
              <input id="fname" defaultValue="tileServer.mxd" className={`h-full w-full rounded-xs border border-[#4ba0e4] bg-white pl-[6px] text-[#333] outline-none ${MONO}`} />
              <span className="pointer-events-none absolute left-[97px] top-[6px] h-[19px] w-px bg-black" />
              <FieldChevron />
            </div>
            <button type="button" className="ml-[26px] h-[33px] rounded border border-[#63ade8] bg-[#fdfdfd] text-[18px] font-light">
              保存<span className={MONO}>(<u>S</u>)</span>
            </button>

            <label htmlFor="ftype" className="pl-1 text-[18px] leading-[26px]">
              保存类型<span className={MONO}>(<u>T</u>):</span>
            </label>
            <div className="relative flex h-8 items-center rounded-xs border border-[#d6d6d6] bg-[#fdfdfd] pl-[5px] text-[18px]">
              <span className="whitespace-pre"><Song text="ArcMap 文档(*.mxd)" /></span>
              <select id="ftype" className="absolute inset-0 w-full appearance-none opacity-0">
                <option>ArcMap 文档(*.mxd)</option>
              </select>
              <FieldChevron />
            </div>
            <button type="button" className="ml-[26px] h-[33px] rounded border border-[#dadada] border-b-[#c4c4c4] bg-[#fdfdfd] text-[18px] font-light">取消</button>
          </div>
        </div>
      </div>
      <ResizeGrip className="absolute bottom-[2px] right-[5px]" />
    </section>
  );
}

function ResizeGrip({ className }: { className: string }) {
  return (
    <svg viewBox="0 0 9 9" className={`h-[9px] w-[9px] ${className}`} aria-hidden="true">
      <path d="M6 0h2v2H6zM3 3h2v2H3zM6 3h2v2H6zM0 6h2v2H0zM3 6h2v2H3zM6 6h2v2H6z" fill="#b5b5b5" />
    </svg>
  );
}

export default function App() {
  return (
    <div className={`relative flex h-screen flex-col overflow-hidden bg-linear-to-r from-[#f0f0f0] to-[#fcfcfc] text-black ${UI}`}>
      <Defs />
      <header className="flex h-[44px] shrink-0 items-center justify-between bg-[#f3f3f3] pb-[4px] pl-[9px] pr-6 text-[#8d8d8d]">
        <div className="flex items-center gap-[6px] text-[18px]">
          <Icon name="logo" />
          <span>无标题 - ArcMap</span>
        </div>
        <div className="flex items-center gap-[54px]">
          <button type="button" aria-label="minimize" className="flex h-4 w-4 items-center"><span className="h-px w-full bg-[#8d8d8d]" /></button>
          <button type="button" aria-label="maximize" className="h-[15px] w-[15px] rounded-xs border border-[#8d8d8d]" />
          <button type="button" aria-label="close window">
            <svg viewBox="0 0 16 16" className="h-4 w-4"><path d="M1 1l14 14M15 1L1 15" stroke="#8d8d8d" strokeWidth="1.300" /></svg>
          </button>
        </div>
      </header>

      <nav className="flex h-[40px] shrink-0 items-center pl-px text-[18px]">
        {MENUS.map((m) => (
          <button key={m} type="button" className="whitespace-nowrap px-[13px] pb-px pr-3">{m}</button>
        ))}
      </nav>

      <div className="flex shrink-0 flex-col gap-px">
        <Toolbar
          items={[
            "new", "open", "save", "print", "|", "cut", "copy", "paste", "del", "|", "undo", "redo", "|", "add",
            <CaretTool />, "|",
            <div className="flex h-[30px] w-[222px] items-center rounded-xs border border-[#dedede] bg-white pl-1 pr-2">
              <select aria-label="scale" disabled className="h-[22px] flex-1 appearance-none bg-[#f0f0f0]" />
              <span className="ml-3"><Chevron className="text-[#b5b5b5]" /></span>
            </div>,
            "|", "editor", "|", "toc", "catalog", "search", "toolbox", "python", "|", "model",
          ]}
        />
        <Toolbar
          items={[
            "zoomin", "zoomout", "pan", "globe", "|", "fixin", "fixout", "|", "back", "fwd", "|", "selfeat",
            <CaretTool className="text-[#999]" />, "clearsel", "|", "pointer", "|", "info", "bolt", "html", "|", "measure", "|",
            "binoc", "route", "xy", "|", "time", "|", "viewer",
          ]}
        />
      </div>

      <div className="flex min-h-0 flex-1">
        <Contents />
        <div className="w-[6px] shrink-0" />
        <MapView />
        <Catalog />
        <div className="ml-[3px] w-[27px] shrink-0 pt-[2px]">
          <button type="button" className="flex h-[116px] w-full flex-col items-center gap-[6px] rounded-l-lg border-2 border-r-0 border-[#a8a8a8] bg-[#f0f0f0] pt-[6px] text-[18px] font-light leading-[18px] text-[#555]">
            <Icon name="create" />
            <span className="[text-orientation:sideways] [writing-mode:vertical-rl]">创建要素</span>
          </button>
        </div>
      </div>

      <footer className="relative flex h-8 shrink-0 items-center justify-end gap-1 bg-[#f0f0f0] pr-[26px] text-[18px]">
        <span className="h-full w-[26px] border-x border-[#f7f7f7]" />
        <span className="w-[408px] whitespace-pre border-r border-[#f7f7f7] pl-1 pt-1">295.775  690.141 未知单位</span>
        <ResizeGrip className="absolute bottom-[1px] right-[2px]" />
      </footer>

      <SaveDialog />
    </div>
  );
}
